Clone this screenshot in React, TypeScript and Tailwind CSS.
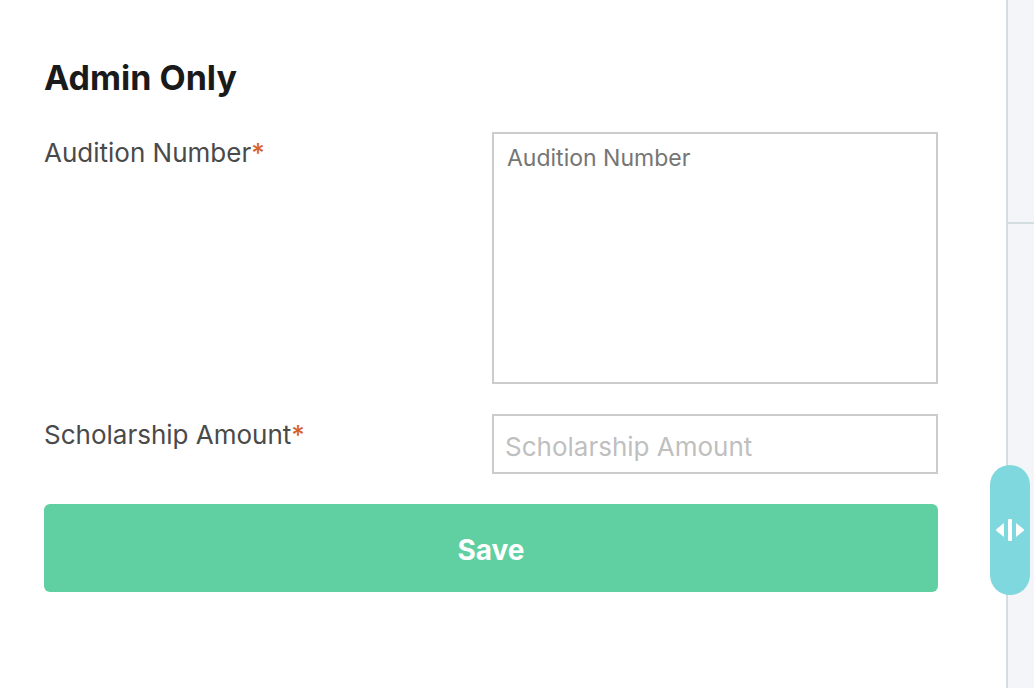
function Label({ htmlFor, children }: { htmlFor: string; children: string }) {
  return (
    <label htmlFor={htmlFor} className="text-[26px] leading-[42px] text-[#4a4a4a]">
      {children}
      <span className="font-medium text-[#d9622b]">*</span>
    </label>
  );
}

function AdminForm() {
  return (
    <form className="pt-14" onSubmit={(e) => e.preventDefault()}>
      <h2 className="text-[34px] leading-11 font-bold text-[#1a1a1a]">Admin Only</h2>

      <div className="mt-8 grid grid-cols-2 items-start gap-x-0.5 gap-y-[30px]">
        <Label htmlFor="audition-number">Audition Number</Label>
        <textarea
          id="audition-number"
          placeholder="Audition Number"
          required
          className="block h-[252px] w-full resize-none border-2 border-[#cccccc] bg-white px-[13px] py-2 text-[23px] leading-8 text-[#4a4a4a] outline-none placeholder:text-[#757575]"
        />

        <Label htmlFor="scholarship-amount">Scholarship Amount</Label>
        <input
          id="scholarship-amount"
          type="text"
          placeholder="Scholarship Amount"
          required
          className="block h-15 w-full border-2 border-[#cccccc] bg-white px-[11px] pt-1 text-[26px] text-[#4a4a4a] outline-none placeholder:text-[#bfbfbf]"
        />
      </div>

      <button
        type="submit"
        className="mt-[30px] h-22 w-full rounded-md bg-[#60cfa1] pt-1 text-[28px] font-bold text-white"
      >
        Save
      </button>
    </form>
  );
}

function ResizeHandle() {
  return (
    <button
      type="button"
      aria-label="Resize panel"
      className="absolute top-[465px] right-1 flex h-[130px] w-10 cursor-col-resize items-center justify-center rounded-full bg-[#80d8df]"
    >
      <svg width="28" height="22" viewBox="0 0 28 22" fill="white" aria-hidden="true">
        <path d="M8 4v14L.6 12a1.3 1.3 0 0 1 0-2z" />
        <rect x="12" y="0" width="4" height="22" rx="1" />
        <path d="M20 4v14l7.4-6a1.3 1.3 0 0 0 0-2z" />
      </svg>
    </button>
  );
}

export default function App() {
  return (
    <div className="relative flex min-h-screen bg-white font-['Inter','Liberation_Sans',sans-serif]">
      <main className="flex-1 pr-[68px] pl-11">
        <AdminForm />
      </main>

      {/* Edge of the neighbouring panel */}
      <aside className="w-7 border-l-2 border-[#d3dde2] bg-[#f4f5f8]">
        <div className="h-56 border-b-2 border-[#d3dde2]" />
      </aside>

      <ResizeHandle />
    </div>
  );
}
